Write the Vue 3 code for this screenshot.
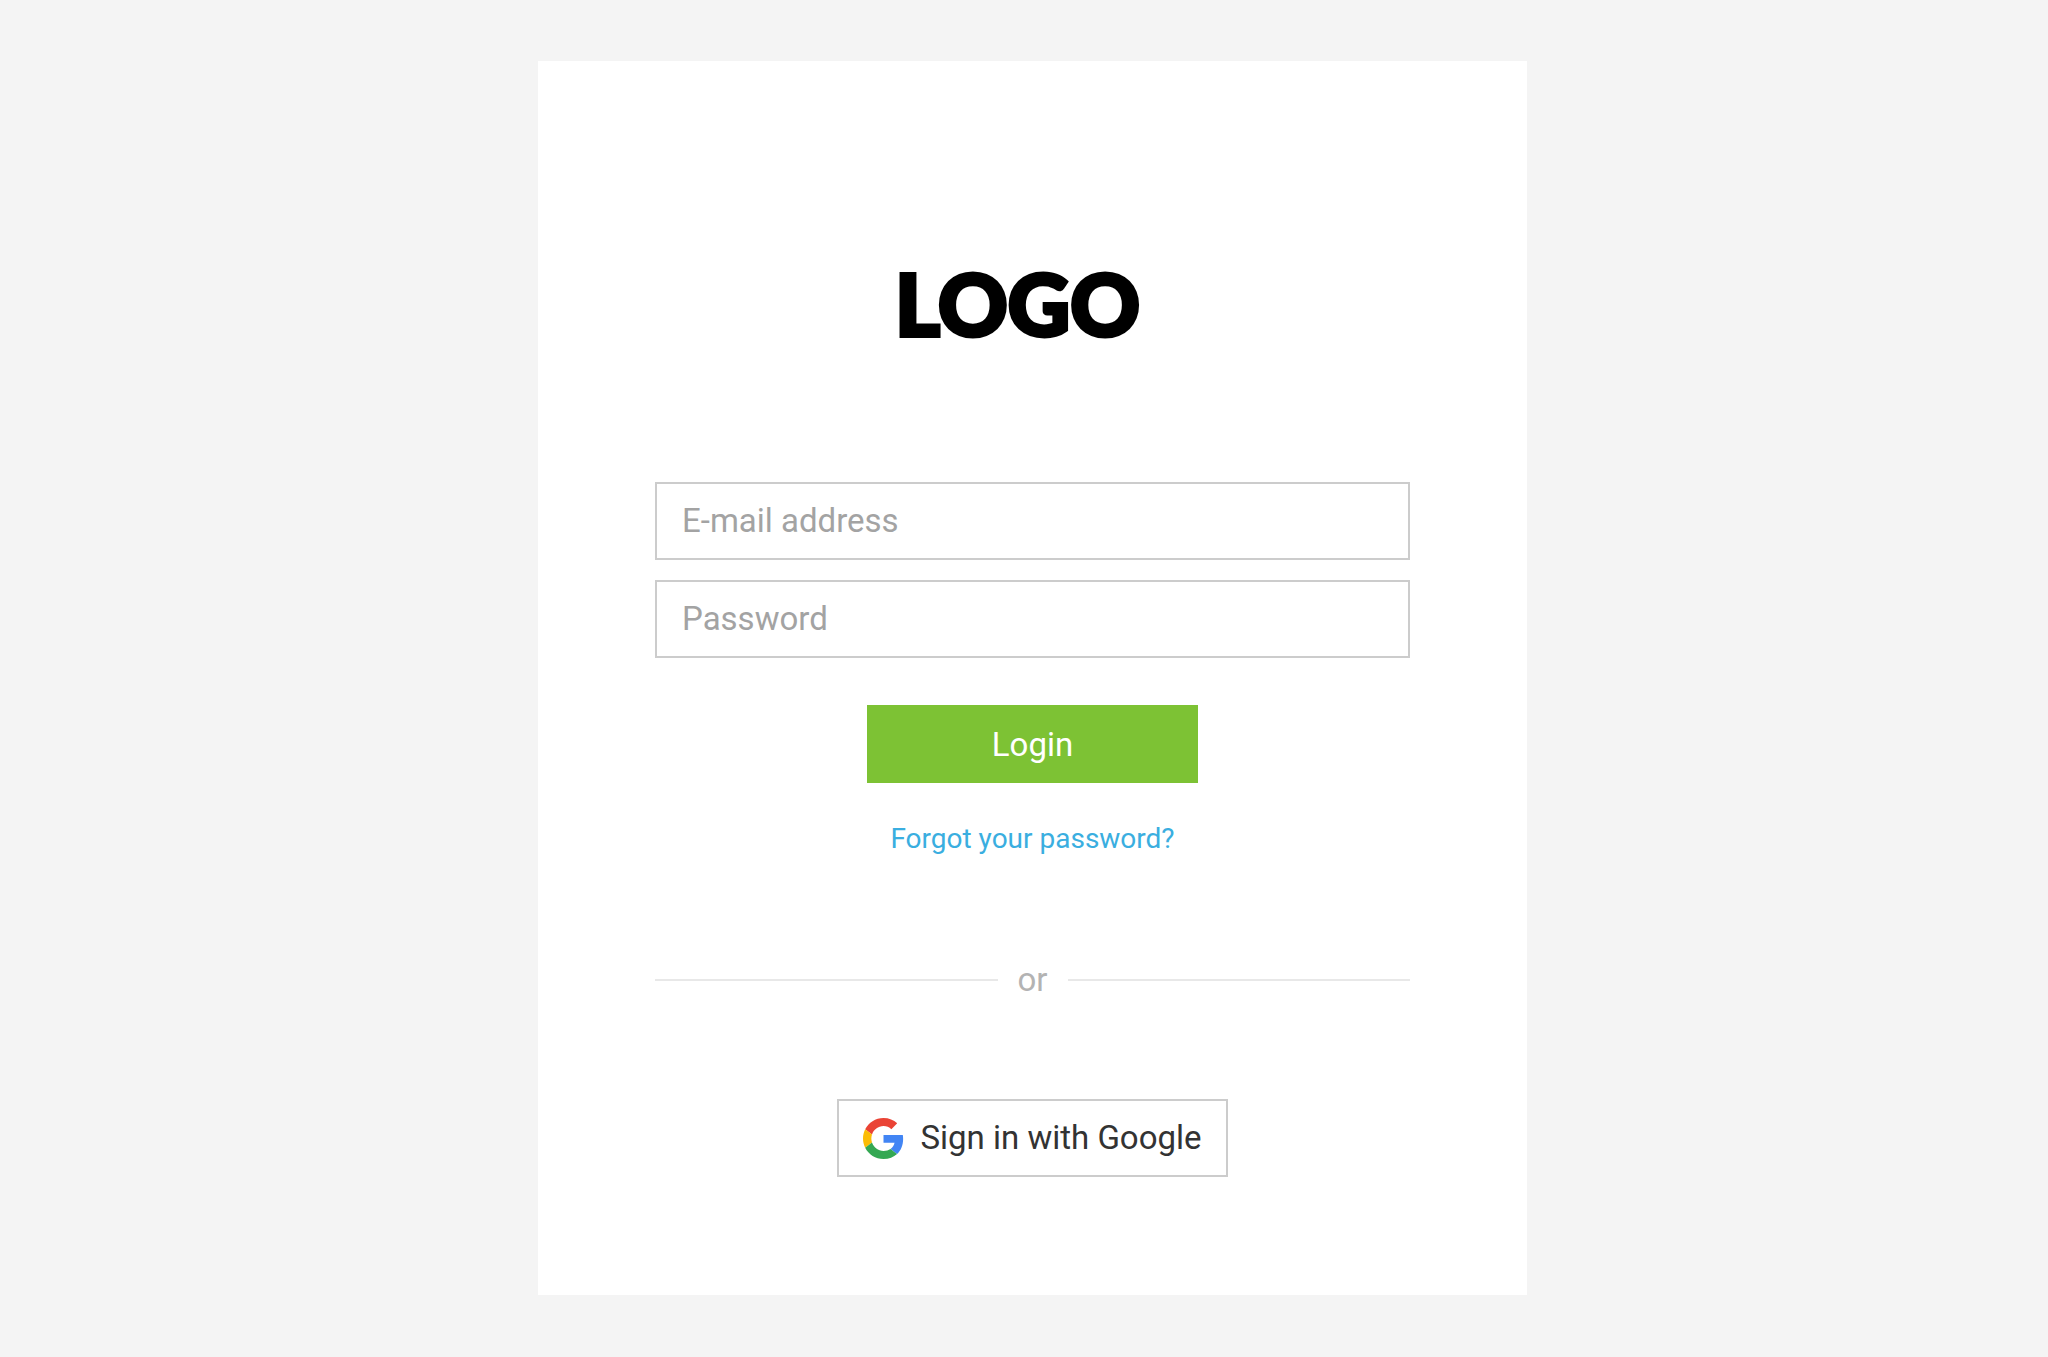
<script setup>
import { ref } from 'vue'

const email = ref('')
const password = ref('')
</script>

<template>
  <main class="page">
    <section class="card">
      <h1 class="logo">LOGO</h1>

      <form class="form" @submit.prevent>
        <input v-model="email" class="field" type="email" name="email" placeholder="E-mail address" aria-label="E-mail address" />
        <input v-model="password" class="field" type="password" name="password" placeholder="Password" aria-label="Password" />
        <button class="login" type="submit">Login</button>
      </form>

      <a class="forgot" href="#">Forgot your password?</a>

      <div class="divider"><span>or</span></div>

      <button class="google" type="button">
        <svg class="google-icon" viewBox="0 0 48 48" aria-hidden="true">
          <path fill="#ea4335" d="M24 9.5c3.54 0 6.71 1.22 9.21 3.6l6.85-6.85C35.9 2.38 30.47 0 24 0 14.62 0 6.51 5.38 2.56 13.22l7.98 6.19C12.43 13.72 17.74 9.5 24 9.5z" />
          <path fill="#4285f4" d="M46.98 24.55c0-1.57-.15-3.09-.38-4.55H24v9.02h12.94c-.58 2.96-2.26 5.48-4.78 7.18l7.73 6c4.51-4.18 7.09-10.36 7.09-17.65z" />
          <path fill="#fbbc05" d="M10.53 28.59c-.48-1.45-.76-2.99-.76-4.59s.27-3.14.76-4.59l-7.98-6.19C.92 16.46 0 20.12 0 24c0 3.88.92 7.54 2.56 10.78l7.97-6.19z" />
          <path fill="#34a853" d="M24 48c6.48 0 11.93-2.13 15.89-5.81l-7.73-6c-2.15 1.45-4.92 2.3-8.16 2.3-6.26 0-11.57-4.22-13.47-9.91l-7.98 6.19C6.51 42.62 14.62 48 24 48z" />
        </svg>
        <span>Sign in with Google</span>
      </button>
    </section>
  </main>
</template>

<style>
body {
  margin: 0;
  background: #f4f4f4;
}
</style>

<style scoped>
.page {
  box-sizing: border-box;
  display: flex;
  justify-content: center;
  align-items: flex-start;
  min-height: 100vh;
  padding: 61px 0 61px 17px;
  background: #f4f4f4;
  font-family: Roboto, "Liberation Sans", sans-serif;
}

.card {
  box-sizing: border-box;
  display: flex;
  flex-direction: column;
  align-items: center;
  width: 100%;
  max-width: 989px;
  padding: 194px 117px 118px;
  background: #fff;
}

.logo {
  margin: 0 0 131px;
  padding-right: 30px;
  color: #000;
  font-family: Lato, sans-serif;
  font-size: 86px;
  font-weight: 900;
  line-height: 96px;
  -webkit-text-stroke: 4px #000;
}

.form {
  display: flex;
  flex-direction: column;
  align-items: center;
  gap: 20px;
  width: 100%;
}

.field,
.login,
.google {
  box-sizing: border-box;
  height: 78px;
  border-radius: 0;
  font-family: inherit;
  font-size: 33px;
  line-height: 40px;
}

.field {
  width: 100%;
  padding: 0 25px 2px;
  border: 2px solid #ccc;
  background: #fff;
  color: #333;
  outline: none;
}

.field::placeholder {
  color: #a3a3a3;
  opacity: 1;
}

.login {
  width: 331px;
  margin-top: 27px;
  padding: 2px 0 0;
  border: 0;
  background: #7dc234;
  color: #fff;
  cursor: pointer;
}

.forgot {
  margin-top: 38px;
  color: #3aaee0;
  font-size: 28px;
  line-height: 36px;
  text-decoration: none;
}

.divider {
  display: flex;
  align-items: center;
  gap: 20px;
  width: 100%;
  margin: 103px 0 99px;
  color: #b3b3b3;
  font-size: 33px;
  line-height: 40px;
}

.divider::before,
.divider::after {
  content: "";
  flex: 1;
  height: 2px;
  background: #e8e8e8;
}

.google {
  display: flex;
  align-items: center;
  justify-content: center;
  gap: 16px;
  width: 391px;
  padding: 0;
  border: 2px solid #ccc;
  background: #fff;
  color: #333;
  cursor: pointer;
}

.google-icon {
  width: 41px;
  height: 41px;
}
</style>
